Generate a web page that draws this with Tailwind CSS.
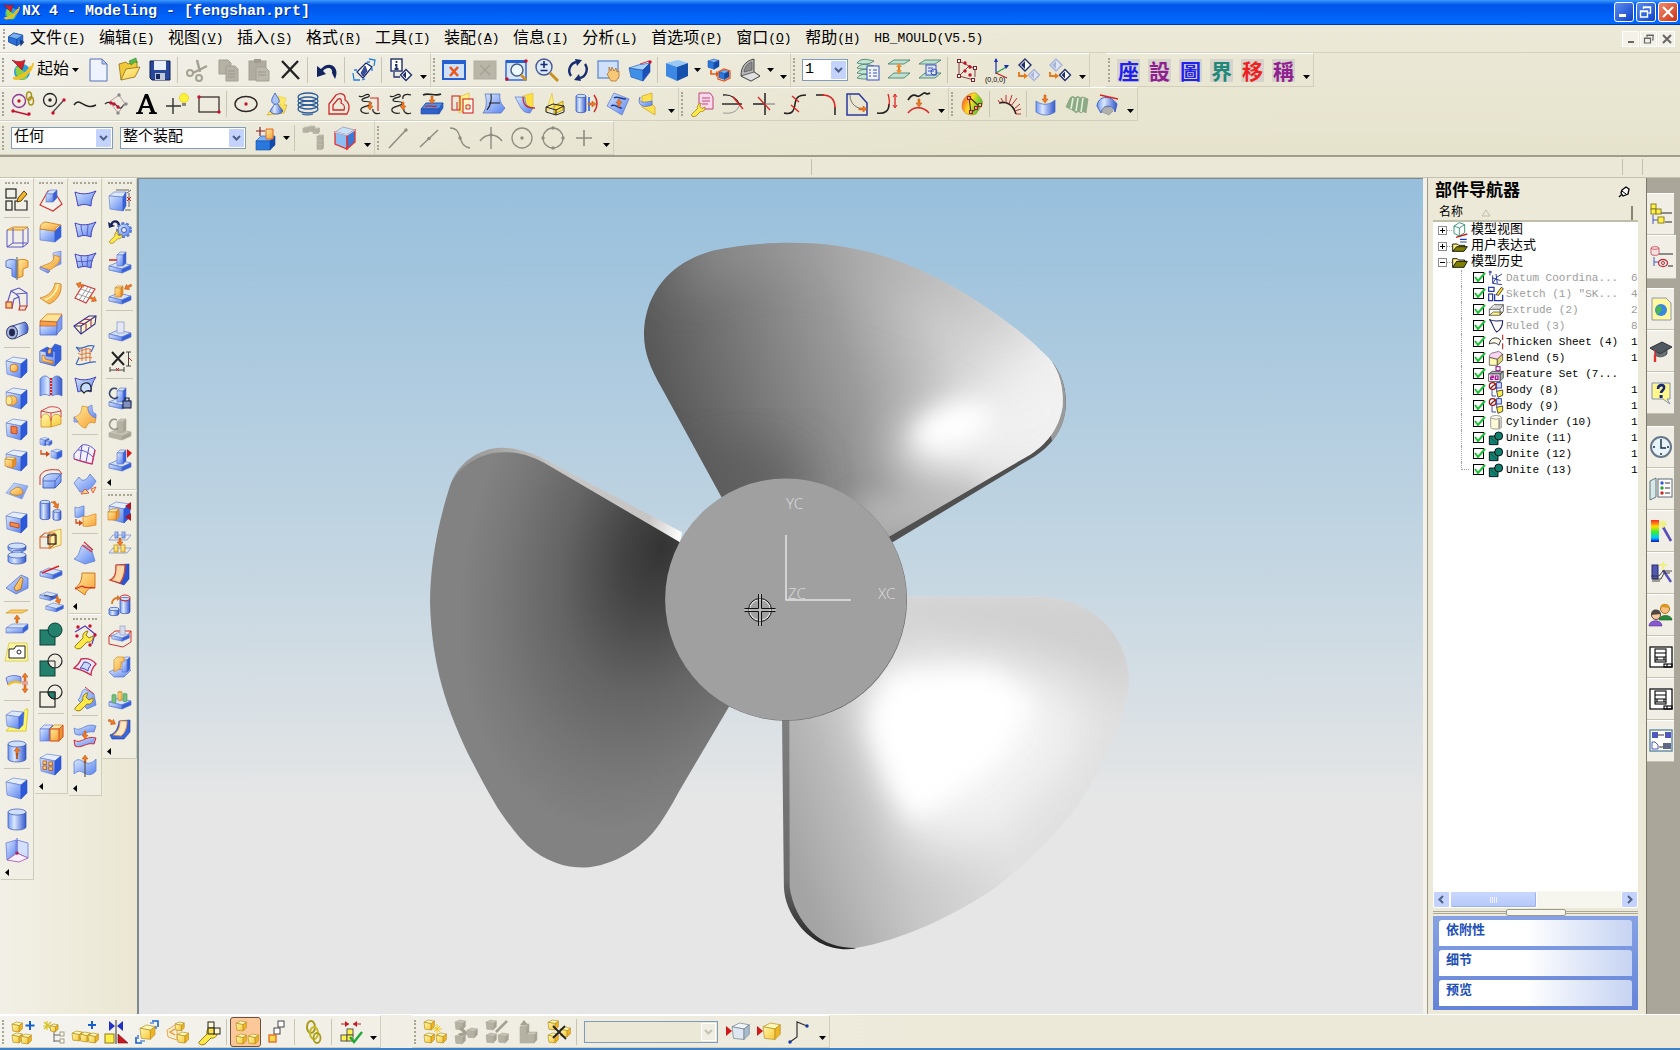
<!DOCTYPE html>
<html lang="zh-CN">

<head>
    <meta charset="UTF-8">
    <meta name="viewport" content="width=device-width, initial-scale=1.0">
    <title>NX 4 - Modeling - [fengshan.prt]</title>
    <script src="https://cdn.jsdelivr.net/npm/@tailwindcss/browser@4"></script>
</head>

<body class="flex h-screen flex-col overflow-hidden bg-[#ece9d8] font-['Liberation_Mono','Noto_Sans_CJK_SC',monospace] text-[13px] text-black">

    <!-- shared gradients -->
    <svg class="absolute h-0 w-0" aria-hidden="true">
        <defs>
            <linearGradient id="gB" x1="0" y1="0" x2="1" y2="1"><stop offset="0" stop-color="#dbe8ff"/><stop offset="1" stop-color="#5a84ee"/></linearGradient>
            <linearGradient id="gY" x1="0" y1="0" x2="1" y2="1"><stop offset="0" stop-color="#fff8b0"/><stop offset="1" stop-color="#f8c838"/></linearGradient>
            <linearGradient id="gO" x1="0" y1="0" x2="1" y2="1"><stop offset="0" stop-color="#ffeb9c"/><stop offset="1" stop-color="#f6a035"/></linearGradient>
            <linearGradient id="gC" x1="0" y1="0" x2="1" y2="0"><stop offset="0" stop-color="#6f98f0"/><stop offset=".35" stop-color="#dbe8ff"/><stop offset="1" stop-color="#3257cc"/></linearGradient>
            <linearGradient id="gR" x1="0" y1="0" x2="0" y2="1"><stop offset="0" stop-color="#f22"/><stop offset=".3" stop-color="#fd0"/><stop offset=".55" stop-color="#3e3"/><stop offset=".8" stop-color="#0cf"/><stop offset="1" stop-color="#11c"/></linearGradient>
            <linearGradient id="gH" x1="0" y1="0" x2="1" y2=".4"><stop offset="0" stop-color="#f33"/><stop offset=".5" stop-color="#fd2"/><stop offset="1" stop-color="#3c3"/></linearGradient>
        </defs>
    </svg>

    <!-- title bar -->
    <header class="flex h-[25px] shrink-0 items-center bg-linear-to-b from-[#3c98ff] from-0% via-[#0054e6] via-20% to-[#0068ff] to-90% pl-[2px] pr-[2px] border-b border-[#0038a8]">
        <span data-icon="logo" class="w-[18px]"></span>
        <h1 class="flex-1 pl-[2px] text-[15px] leading-[22px] font-bold text-white [text-shadow:1px_1px_0_#003090]">NX 4 - Modeling - [fengshan.prt]</h1>
        <div class="flex gap-[2px]">
            <button aria-label="最小化" class="grid h-[20px] w-[20px] place-items-center rounded-[3px] border border-white bg-linear-to-br from-[#5a8cf0] to-[#1040c8]"><svg width="14" height="14"><path d="M2 9h7v3H2z" fill="#fff"/></svg></button>
            <button aria-label="还原" class="grid h-[20px] w-[20px] place-items-center rounded-[3px] border border-white bg-linear-to-br from-[#5a8cf0] to-[#1040c8]"><svg width="14" height="14"><path d="M4.500 4V2h7v6h-2M4 2.500h8M1.500 6h7v6h-7zM1 6.500h8" fill="none" stroke="#fff" stroke-width="1.400"/></svg></button>
            <button aria-label="关闭" class="grid h-[20px] w-[20px] place-items-center rounded-[3px] border border-white bg-linear-to-br from-[#f08868] to-[#cc2f10]"><svg width="14" height="14"><path d="M2 2l10 10M12 2L2 12" stroke="#fff" stroke-width="2.200"/></svg></button>
        </div>
    </header>

    <div class="shrink-0 bg-linear-to-r from-[#f4f3ee] to-[#ece9d8] to-60%">
        <div class="bg-linear-to-b from-transparent to-[#ddd9bb]/40">
            <!-- menu bar -->
            <nav class="flex h-[28px] items-center border-b border-[#d5d2c2]">
                <div class="flex w-[7px] justify-center"><i class="h-[20px] border-l-2 border-dotted border-[#a8a594]"></i></div>
                <span data-icon="part" class="w-[18px]"></span>
                <div id="menus" class="flex flex-1 pl-[5px]"></div>
                <div class="flex gap-px pr-[5px]">
                    <button aria-label="最小化窗口" class="grid h-[16px] w-[17px] place-items-center border border-white bg-[#f3f1e8]"><svg width="12" height="12"><path d="M3 8h6v2H3z" fill="#666"/></svg></button>
                    <button aria-label="还原窗口" class="grid h-[16px] w-[17px] place-items-center border border-white bg-[#f3f1e8]"><svg width="12" height="12"><path d="M4 4V2h6v5H9M4 2.500h7M1.500 5h6v5h-6zM1 5.500h7" fill="none" stroke="#666" stroke-width="1.200"/></svg></button>
                    <button aria-label="关闭窗口" class="grid h-[16px] w-[17px] place-items-center border border-white bg-[#f3f1e8]"><svg width="12" height="12"><path d="M2 2l8 8M10 2l-8 8" stroke="#666" stroke-width="2"/></svg></button>
                </div>
            </nav>

            <!-- toolbar 1 -->
            <div class="flex h-[34px]">
                <div data-bar="start new open save | cut copy paste delete | undo | cubeview | info v"></div>
                <div data-bar="fit fitgrey zoombox zoom rotate pan persp | bluecube > explode section > v"></div>
                <div data-bar="layer layers1 layers2 layers3 | wcs1 wcs2 hide unhide v"></div>
                <div class="w-[16px]"></div>
                <div data-bar="座 設 圖 界 移 稱 v"></div>
            </div>
            <!-- toolbar 2 -->
            <div class="flex h-[34px]">
                <div data-bar="basic line spline studio text point rect | ellipse cone helix offset bridge simplify project combine sheetcut intersect extractc unroll wrap isocline v"></div>
                <div data-bar="editparam trim trimcorner divide fillet stretch length smooth v"></div>
                <div data-bar="analysis | comb | flow reflect slope v"></div>
            </div>
            <!-- selection bar -->
            <div class="flex h-[34px]">
                <div data-bar="any assembly snapcube > | grayflow rededge v"></div>
                <div data-bar="s1 s2 s3 s4 s5 s6 s7 v"></div>
            </div>
        </div>
    </div>

    <!-- cue line -->
    <div class="flex h-[23px] shrink-0 justify-end border-t-2 border-[#a09d8c] border-b border-b-[#c5c2b0] bg-[#ebe8d7] py-[2px]">
        <div class="flex-1"></div>
        <div class="w-[811px] border-l border-[#c2bfae]"></div>
        <div class="w-[20px] border-l border-[#c2bfae]"></div>
        <div class="w-[38px] border-l border-[#c2bfae]"></div>
    </div>

    <main class="flex min-h-0 flex-1">
        <!-- left palettes -->
        <aside class="flex w-[137px] shrink-0 gap-px bg-linear-to-r from-[#f2f0e6] to-[#ebe7d3] pl-px">
            <div class="w-[33px]"><div data-palette="sketch | extrude revolve sweep tube | hole boss pocket pad emboss slot groove rib | offsetface datumtext thicken2 | trimbody split | cubel cyll datumcsys v"></div></div>
            <div class="w-[33px]"><div data-palette="draft blend faceblend softblend chamfer shell sew wraps patch offsets copyf mirror1 slab slab2 unite subtract inter | boxhalf holes4 v"></div></div>
            <div class="w-[33px]"><div data-palette="ruled thru mesh swept sections bridge3 nsided transition | meshred wave enlarge | trimsheet orangepipe v"></div><div data-palette="wrench1 redmesh wrench2 | waves2 waveup v"></div></div>
            <div class="w-[34px]"><div data-palette="dimbox undogear movef placef | greyface deletedim | lockf greylock redflag v"></div><div data-palette="redbox patterns redblend cyl2 redpocket lstep greens radface v"></div></div>
        </aside>

        <!-- graphics window -->
        <section class="relative min-w-0 flex-1 border-l-2 border-t border-[#7c8a92] bg-linear-to-b from-[#97bfdc] via-[#c4d6e2] via-46% to-[#e6e6e6] to-75%">
            <svg class="absolute inset-0 h-full w-full" aria-label="fengshan">
                <defs>
                    <linearGradient id="top1" gradientUnits="userSpaceOnUse" x1="560" y1="500" x2="1330" y2="260"><stop offset="0" stop-color="#565656"/><stop offset=".22" stop-color="#747474"/><stop offset=".5" stop-color="#9c9c9c"/><stop offset=".75" stop-color="#cfcfcf"/><stop offset="1" stop-color="#f0f0f0"/></linearGradient>
                    <radialGradient id="left1" gradientUnits="userSpaceOnUse" cx="540" cy="700" r="560" gradientTransform="translate(540 700) rotate(20) scale(.7 1.050) translate(-540 -700)"><stop offset="0" stop-color="#343434"/><stop offset=".2" stop-color="#444"/><stop offset=".5" stop-color="#646464"/><stop offset=".8" stop-color="#787878"/><stop offset="1" stop-color="#828282"/></radialGradient>
                    <linearGradient id="right1" gradientUnits="userSpaceOnUse" x1="800" y1="1300" x2="1200" y2="1160"><stop offset="0" stop-color="#a4a4a4"/><stop offset=".5" stop-color="#c8c8c8"/><stop offset="1" stop-color="#e0e0e0"/></linearGradient>
                    <linearGradient id="rim" gradientUnits="userSpaceOnUse" x1="110" y1="520" x2="578" y2="680"><stop offset="0" stop-color="#909090"/><stop offset=".4" stop-color="#c8c6c4"/><stop offset=".85" stop-color="#c8c6c4"/><stop offset="1" stop-color="#fff"/></linearGradient>
                    <linearGradient id="rim2" x1="0" y1="0" x2="0" y2="1"><stop offset="0" stop-color="#808080"/><stop offset=".7" stop-color="#6a6a6a"/><stop offset="1" stop-color="#222"/></linearGradient>
                    <filter id="b20" x="-50%" y="-50%" width="200%" height="200%"><feGaussianBlur stdDeviation="24"/></filter>
                    <filter id="b50" x="-50%" y="-50%" width="200%" height="200%"><feGaussianBlur stdDeviation="50"/></filter>
                    <clipPath id="cTop"><path id="pTop" d="M665 600L540 378C515 335 500 300 504 255C512 180 560 125 645 102C700 90 760 86 805 86C900 86 980 102 1060 135C1170 180 1290 265 1345 325C1363 352 1369 380 1367 415C1361 452 1342 485 1300 512L1000 682Z"/></clipPath>
                    <clipPath id="cRight"><path id="pRight" d="M1030 797H1320C1370 800 1410 815 1440 838C1480 870 1503 915 1504 970C1500 1030 1478 1085 1410 1200C1370 1260 1300 1330 1225 1385C1130 1445 1040 1485 940 1504C905 1503 875 1495 850 1472C825 1448 808 1415 804 1380L803 1000Z"/></clipPath>
                </defs>
                <g transform="translate(261 21) scale(.4847 .4974)">
                    <path d="M1005 690L1018 687L1310 515C1350 490 1369 455 1373 420C1376 385 1368 352 1345 325L1300 400L1000 660Z" fill="#505050"/>
                    <path d="M1373 420C1376 385 1368 352 1345 325L1330 400L1345 485C1362 465 1371 445 1373 420Z" fill="#9a9a9a"/>
                    <use href="#pTop" fill="url(#top1)"/>
                    <g clip-path="url(#cTop)">
                        <ellipse cx="700" cy="560" rx="140" ry="70" fill="#5a5a5a" opacity=".7" filter="url(#b50)"/>
                        <path d="M640 60L1060 60L1330 260L1330 290L1000 160L760 110L560 180Z" fill="#a2a2a2" opacity=".6" filter="url(#b50)"/>
                        <path d="M1000 500L1130 410L1300 320L1420 330L1420 480L1330 560L1080 560Z" fill="#f2f2f2" opacity=".9" filter="url(#b50)"/>
                        <ellipse cx="1140" cy="455" rx="85" ry="42" fill="#fff" transform="rotate(-20 1140 455)" filter="url(#b20)"/>
                        <path d="M960 700L930 600L1180 560L1200 610Z" fill="#bcbcbc" opacity=".7" filter="url(#b20)"/>
                    </g>

                    <path d="M582 668L290 517C250 500 215 495 190 500C150 508 118 535 105 570L130 620L575 700Z" fill="url(#rim)"/>
                    <path d="M590 695L300 530C260 508 230 505 195 508C150 516 115 545 103 575C75 660 62 740 62 810C66 960 110 1070 200 1220C230 1265 250 1285 262 1297C300 1330 340 1342 380 1342C440 1340 500 1300 525 1268C540 1250 560 1218 575 1190L690 1000Z" fill="url(#left1)"/>

                    <path d="M788 1030L792 1380C793 1410 805 1435 825 1460C850 1490 890 1512 940 1505L860 1440L815 1030Z" fill="url(#rim2)"/>
                    <use href="#pRight" fill="url(#right1)"/>
                    <g clip-path="url(#cRight)">
                        <path d="M1000 780H1560V1000L1340 930L1000 880Z" fill="#cfcfcf" filter="url(#b50)"/>
                        <path d="M1000 920L1240 930L1400 1000L1400 1110L1220 1290L1060 1310L990 1130L950 1010Z" fill="#f6f6f6" opacity=".85" filter="url(#b50)"/>
                        <path d="M1020 950L1220 945L1310 1010L1250 1120L1130 1210L1060 1250L1010 1180L965 1060L975 1010Z" fill="#fff" filter="url(#b20)"/>
                    </g>
                    <ellipse cx="797" cy="804" rx="249" ry="243" fill="#666"/>
                    <ellipse cx="796" cy="803" rx="249" ry="243" fill="#a0a0a0"/>
                </g>
                <path d="M647 356V421H712" fill="none" stroke="#e4e4e4" stroke-width="1.500"/>
                <g class="font-['Noto_Sans',sans-serif] text-[15px] font-light" fill="#d6d6d6">
                    <text x="647" y="330">YC</text>
                    <text x="649" y="420">ZC</text>
                    <text x="739" y="420">XC</text>
                </g>
                <g fill="none" stroke="#111">
                    <circle cx="621" cy="431" r="10.500" stroke="#e8e8e8" stroke-width="1.200"/>
                    <circle cx="621" cy="431" r="11.500"/>
                    <path d="M621 415v32M605 431h32" stroke="#ccc"/>
                    <path d="M619.500 415v14.500h-14M622.500 415v14.500h14M619.500 447v-14.500h-14M622.500 447v-14.500h14"/>
                </g>
            </svg>
        </section>

        <!-- part navigator -->
        <div class="w-[5px] shrink-0 border-r border-[#9c9986] bg-[#f4f2e8]"></div>
        <aside class="flex w-[218px] shrink-0 flex-col border-l-[5px] border-r-[8px] border-[#ece9d8] bg-[#ece9d8] pb-[4px]">
            <div class="flex h-[26px] items-center justify-between pt-[2px] pr-[6px] pl-[2px]">
                <h2 class="text-[17px] leading-[24px] font-bold">部件导航器</h2>
                <button aria-label="固定" class="w-[14px]"><svg width="12" height="12"><path d="M1 11l3-3M4 4l4-3 3 2-1 5-5 2-2-3z" fill="#fff" stroke="#000" stroke-width="1.300"/><path d="M4 5l4 3" stroke="#000"/></svg></button>
            </div>
            <div class="flex h-[18px] shrink-0 items-center border-b-2 border-[#c0bda8] pt-[2px] pl-[6px] text-[12px] leading-[14px]">
                <span class="w-[42px]">名称</span><svg width="10" height="8"><path d="M1 7l4-6 4 6z" fill="none" stroke="#c0bda8"/></svg>
                <i class="mr-[5px] ml-auto h-[14px] border-l-2 border-[#888571]"></i>
            </div>
            <ul id="tree" class="min-h-0 flex-1 overflow-hidden bg-white"></ul>
            <div class="flex h-[17px] shrink-0 bg-[#f6f5ee]">
                <button aria-label="向左滚动" class="grid w-[17px] place-items-center rounded-[2px] border border-white bg-[#c3d3fd]"><svg width="9" height="9"><path d="M6 1L2.500 4.500 6 8" fill="none" stroke="#4d6185" stroke-width="2"/></svg></button>
                <div class="grid w-[87px] place-items-center rounded-[2px] border border-white bg-linear-to-b from-[#c9d7fe] to-[#b5c8f8] shadow-[inset_-1px_-1px_0_#9ab2e8]"><svg width="10" height="6"><path d="M1.500 0v6M3.500 0v6M5.500 0v6M7.500 0v6" stroke="#eef3ff"/></svg></div>
                <button aria-label="向右滚动" class="ml-auto grid w-[17px] place-items-center rounded-[2px] border border-white bg-[#c3d3fd]"><svg width="9" height="9"><path d="M3 1l3.500 3.500L3 8" fill="none" stroke="#4d6185" stroke-width="2"/></svg></button>
            </div>
            <div class="flex h-[8px] shrink-0 items-center">
                <i class="h-[3px] flex-1 border-y border-[#aca899]"></i>
                <i class="h-[7px] w-[60px] rounded-[2px] border border-[#9c9986] bg-[#f6f5ee]"></i>
                <i class="h-[3px] flex-1 border-y border-[#aca899]"></i>
            </div>
            <div class="flex shrink-0 flex-col gap-[4px] bg-linear-to-b from-[#86a2e4] to-[#6583d8] px-[6px] py-[4px] text-[13px] font-bold text-[#1c50b8]">
                <button class="h-[26px] rounded-t-[3px] bg-linear-to-r from-white from-45% to-[#c6d3f2] pl-[7px] pb-[4px] text-left leading-[22px]">依附性</button>
                <button class="h-[26px] rounded-t-[3px] bg-linear-to-r from-white from-45% to-[#c6d3f2] pl-[7px] pb-[4px] text-left leading-[22px]">细节</button>
                <button class="h-[26px] rounded-t-[3px] bg-linear-to-r from-white from-45% to-[#c6d3f2] pl-[7px] pb-[4px] text-left leading-[22px]">预览</button>
            </div>
        </aside>

        <!-- resource bar -->
        <div class="flex w-[34px] shrink-0 flex-col border-l border-[#7c796a] bg-[#aaa699] pt-[15px]">
            <div id="tabs1" class="flex flex-col"></div>
            <div id="tabs2" class="mt-[9px] flex flex-col"></div>
            <div id="tabs3" class="mt-[12px] flex flex-col"></div>
        </div>
    </main>

    <!-- assembly toolbar -->
    <footer class="flex h-[36px] shrink-0 border-t border-b-2 border-t-white border-b-[#3d82c8] bg-linear-to-r from-[#f4f3ee] to-[#ece9d8] to-60%">
        <div data-bar="addcomp newcomp array mirror explodea replace mate | compson move | chain | check v"></div>
        <div class="w-[31px]"></div>
        <div data-bar="ex1 ex2 ex3 ex4 ex5 | explosion hidec showc trace v"></div>
    </footer>

    <script>
        // drawing helpers, all on a 24x24 grid
        const p = (d, f = 'none', s = '#222', w = 1) => `<path d="${d}" fill="${f}" stroke="${s}" stroke-width="${w}"/>`;
        const l = (d, s = '#222', w = 1) => p(d, 'none', s, w);
        const c = (x, y, r, f = 'none', s = 'none', w = 1) => `<circle cx="${x}" cy="${y}" r="${r}" fill="${f}" stroke="${s}" stroke-width="${w}"/>`;
        const e = (x, y, rx, ry, f = 'none', s = 'none', w = 1) => `<ellipse cx="${x}" cy="${y}" rx="${rx}" ry="${ry}" fill="${f}" stroke="${s}" stroke-width="${w}"/>`;
        const r = (x, y, w, h, f = 'none', s = 'none', sw = 1) => `<rect x="${x}" y="${y}" width="${w}" height="${h}" fill="${f}" stroke="${s}" stroke-width="${sw}"/>`;
        const tones = {
            b: ['#d3e2ff', 'url(#gB)', '#3460dc', '#5a74c8'],
            d: ['#7fb4f4', '#2a78dc', '#124aa8', '#124aa8'],
            y: ['#fff8b8', 'url(#gY)', '#f0b428', '#b89020'],
            o: ['#ffe8a0', 'url(#gO)', '#ee9430', '#c87818'],
            g: ['#c6c3b6', '#b5b2a4', '#a5a293', '#b0ad9e'],
            w: ['#f2f6fa', '#dfe8f0', '#a9bccc', '#6d8090'],
        };
        const box = (x, y, w, h, d, t = 'b') => {
            const k = tones[t];
            return p(`M${x} ${y + d}l${d} ${-d}h${w}l${-d} ${d}z`, k[0], k[3], .6) + p(`M${x + w} ${y + d}l${d} ${-d}v${h}l${-d} ${d}z`, k[2], k[3], .6) + r(x, y + d, w, h, k[1], k[3], .6);
        };
        const cyl = (x, y, rx, h, f = 'url(#gC)', s = '#3552b0', t = '#cfe0ff') => p(`M${x - rx} ${y}v${h}a${rx} ${rx / 3} 0 0 0 ${rx * 2} 0v${-h}`, f, s, .7) + e(x, y, rx, rx / 3, t, s, .7);
        const iso = (x, y, s, t = 'b') => {
            const k = tones[t];
            return p(`M${x} ${y}l${s} ${-s * .35} ${s} ${s * .25} ${-s * .9} ${s * .4}z`, k[0], k[3], .5) + p(`M${x} ${y}l${s * 1.1} ${s * .3}v${s * 1.2}l${-s * 1.1} ${-s * .35}z`, k[1], k[3], .5) + p(`M${x + s * 2} ${y - s * .1}l${-s * .9} ${s * .4}v${s * 1.2}l${s * .9} ${-s * .5}z`, k[2], k[3], .5);
        };
        // small yellow component block
        const comp = (x, y, s = 9, t = 'y') => {
            const k = tones[t];
            return p(`M${x} ${y + s * .25}l${s * .5} ${-s * .25} ${s * .65} ${s * .12} ${-s * .35} ${s * .28}z`, k[0], k[3], .7) + p(`M${x} ${y + s * .25}l${s * .8} ${s * .15}v${s * .7}l${-s * .7} ${-s * .08}z`, k[1], k[3], .7) + p(`M${x + s * .8} ${y + s * .4}l${s * .35} ${-s * .28}v${s * .62}l${-s * .35} ${s * .36}z`, k[2], k[3], .7);
        };
        const plate = (y, t = 'b') => p(`M1 ${y + 3}l6-4h16l-5 4z`, tones[t][0], tones[t][3], .6) + p(`M1 ${y + 3}h17v5H1z`, tones[t][1], tones[t][3], .6) + p(`M18 ${y + 3}l5-4v5l-5 4z`, tones[t][2], tones[t][3], .6);
        const dot = (x, y, f = '#c8102e') => c(x, y, 1.7, f);
        const arrow = (x, y, a = 0) => `<g transform="translate(${x} ${y}) rotate(${a})">${p('M-1-4h2v4h2L0 4-3 0h2z', '#f07a20', '#b85010', .5)}</g>`;
        const wrench = p('M2 22l8-8c-1-4 2-7 5-7l-2 4 3 3 4-2c1 4-3 7-6 6l-6 6c-3 2-7 0-6-2z', '#ffe84a', '#8a7000', .9);
        const gball = r(1, 8, 15, 15, '#23806c', '#0c4038') + c(16, 8, 7, '#23806c', '#0c4038');
        // feature block: light front face, deep blue side
        const cubeb = p('M1 6l7-4 14 2-6 5z', '#e4eeff', '#5a74c8', .6) + p('M1 6l15 3v14L2 19z', 'url(#gB)', '#5a74c8', .6) + p('M16 9l6-5v13l-6 6z', '#2c58dc', '#2c50c0', .6);
        const slab = (y, t) => p(`M1 ${y + 4}l9-4 13 3-9 4z`, tones[t || 'b'][0], tones[t || 'b'][3], .7) + p(`M1 ${y + 4}l13 3v4L1 ${y + 8}z`, tones[t || 'b'][1], tones[t || 'b'][3], .7) + p(`M14 ${y + 7}l9-4v4l-9 4z`, tones[t || 'b'][2], tones[t || 'b'][3], .7);
        const base = (t) => slab(12, t);
        const step = (t = 'b') => base(t) + box(9, 2, 6, 11, 3, t);
        const dia = (x, y, s, t) => p(`M${x} ${y - s}l${s} ${s} ${-s} ${s} ${-s} ${-s}z`, t ? '#dfe5f5' : '#fff', t || '#20306a', 1.4) + p(`M${x} ${y - s + 2}v${2 * s - 4}l${-s + 2} ${-s + 2}z`, t || '#20306a', 'none');
        const sheets = (a) => p('M1 6l6-4h16l-6 4z', '#bfe0d0', '#3c7868', .8) + p('M1 20l6-5h16l-6 5z', '#bfe0d0', '#3c7868', .8) + a;
        const bands = p('M2 4c7 3 14 2 21-1-3 4-5 9-5 15-5-2-9-2-13 0C4 13 3 8 2 4z', 'url(#gB)', '#4440b8', 1);

        const icons = {
            logo: c(12, 14, 8, '#28a0d8') + p('M6 9c4-2 8 8 12 6l-2 6c-6 3-12-4-10-12z', '#8fd040', 'none') + l('M3 20c6 4 20-6 20-15M3 20c4 0 13-3 18-12', '#f4c020', 1.800) + p('M2 2l10 10L15 2c-4 2-8 2-13 0z', '#d8202c', '#801018', .6),
            part: p('M2 9l7-5 12 3v9l-8 5-11-5z', '#2870d8', '#103c90') + p('M2 9l11 3 8-5-12-3z', '#78b0f0', '#103c90', .7) + l('M13 12v9', '#103c90') + p('M17 12l6 4-5 6z', '#1a3c80', 'none'),
            new: p('M4 1h12l5 5v17H4z', '#eef3ff', '#5570b8', 1) + p('M16 1v5h5z', '#b8c8f0', '#5570b8', .8),
            open: p('M2 6l7-2 2 2 9-3v8L4 22z', '#f0c838', '#907010', .8) + p('M4 22l5-11 14-2-5 10z', 'url(#gY)', '#907010', .8) + p('M12 3l7-3 1 5-2-1-4 3z', '#58b848', '#287820', .5),
            save: p('M2 3h20v19H4l-2-2z', '#28489c', '#101c50') + r(6, 3, 12, 9, '#e8f0fc') + r(7, 15, 10, 7, '#c0c8d8') + r(8, 16, 4, 5, '#182860'),
            cut: l('M12 2l3 12M22 8L8 15', '#a5a294', 2.500) + c(5, 15, 3, 'none', '#a5a294', 2) + c(14, 20, 3, 'none', '#a5a294', 2),
            copy: p('M3 2h9l3 3v11H3z', '#b5b2a5', '#a3a094') + p('M10 8h9l3 3v12H10z', '#b5b2a5', '#a3a094') + l('M12 13h7M12 16h7M12 19h7', '#9a978a'),
            paste: r(2, 3, 17, 19, '#b0ada0', '#a3a094') + r(7, 1, 7, 4, '#a09d90') + p('M9 9h9l4 4v10H9z', '#bbb8ab', '#a3a094') + l('M11 14h8M11 17h8', '#9a978a'),
            delete: l('M4 3l17 18M20 3L4 20', '#222', 2.400),
            undo: p('M2 8v11l9-3-3-3c4-5 10-3 9 2l3 6c6-13-7-19-14-10z', '#14245e', 'none'),
            cubeview: p('M5 14L14 5l6 4-9 11z', '#fff', '#182870', 1.200) + p('M9 15l4-7 2 5-4 5z', '#3850a0', '#182870', .8) + l('M17 1l6 1-1 6M15 4l3 0M20 10l0 3M1 15l1 7 6 0M5 12l-3 0M10 22l3-1', '#2080e0', 1.300),
            info: r(2, 1, 11, 12, '#fff', '#20306a', 1.400) + l('M7.500 3v2M6 7h1.500v4M5.500 11h4', '#20306a', 1.800) + dia(17, 17, 5.500) + l('M5 14v5h6', '#20306a', 1.300),
            fit: r(1, 3, 22, 18, '#cfe0fc', '#2860d0', 2) + r(1, 3, 22, 3, '#2860d0') + l('M8 9l8 9M16 9l-8 9', '#e85818', 2.600),
            fitgrey: r(1, 3, 22, 18, '#b9b6a8', '#b0ada0', 1) + l('M7 7l10 10M17 7L7 17', '#a3a094', 1.300),
            zoombox: r(2, 3, 20, 19, '#d8e6fc', '#2860d0', 1.400) + r(2, 2, 20, 3, '#2860d0') + c(13, 12, 6, '#eef8ff', '#486080', 1.500) + l('M17 17l5 5', '#d89018', 2.600) + dot(22, 3) + dot(3, 21),
            zoom: c(9, 9, 8, '#dbeaff', '#485890', 1.400) + l('M9 3v7M5.500 6.500h7M5.500 12.500h7', '#182870', 1.600) + l('M15 15l8 8', '#c89020', 3),
            rotate: l('M10 4a9 9 0 0 0-5 14', '#182c70', 2.400) + l('M14 20a9 9 0 0 0 5-14', '#182c70', 2.400) + p('M9 1l7 1-5 6zM15 23l-7-1 5-6z', '#182c70', 'none'),
            pan: r(1, 3, 20, 17, '#cfe0fc', '#6890d8', 1.400) + p('M10 16l2-2v-5l2 4 1-4 2 4 2-3 1 4 2-1v6l-3 4h-5z', '#f8c878', '#a86818', .7),
            persp: p('M1 10l14 2v11L3 19z', '#4090e8', '#1850b0', .6) + p('M1 10l9-3 12-2-7 7z', '#a8d0fc', '#1850b0', .6) + p('M15 12l7-7v9l-7 9z', '#1c50b8', '#1850b0', .6) + dot(22, 4) + l('M12 6l9-3', '#c8102e', .8),
            bluecube: p('M1 5l12-3 10 3-11 4z', '#98c8f8', 'none') + p('M1 5l11 4v14L1 18z', '#3c88e4', 'none') + p('M12 9l11-4v13l-11 5z', '#1450ac', 'none'),
            explode: iso(1, 3, 5.500, 'd') + l('M4 12v4h5', '#e85818', 1.600) + p('M9 13l3 3-3 3z', '#e85818', 'none') + iso(12, 14, 5, 'd') + p('M11 14l6-3 6 2v7l-6 3-6-2z', 'none', '#e85818', 1.300),
            section: p('M3 18c0-9 4-15 13-17v13l6 4-9 5z', '#b8b8b8', '#484848', 1) + p('M3 18l13-4 6 4-9 5z', '#e0e0e0', '#484848', .8) + p('M6 14c1-6 4-9 8-10v8z', '#8c8c8c', '#484848', .6),
            layers1: [2, 7, 12, 17].map(y => p(`M1 ${y + 3}c4-5 9-4 17-2-4 3-9 4-17 2z`, '#c4e4d4', '#3c7868', .8)).join('') + r(11, 8, 12, 14, '#f0f4ff', '#3850b8') + l('M13 12h2M13 15h2M13 18h2M17 12h4M17 15h4M17 18h4', '#3850b8'),
            layers2: sheets(l('M12 6v9', '#e87818', 2) + p('M9 9l3-4 3 4zM9 12l3 4 3-4z', '#f09030', 'none')),
            layers3: sheets(r(8, 7, 10, 10, '#dfe8ff', '#3850b8') + l('M10 10h5M10 13h6', '#3850b8') + c(16, 14, 3, 'none', '#3850b8')),
            wcs1: l('M4 3v15l15 4M4 3l16 8v8M4 18L15 7', '#803030', .9) + [[4, 3], [4, 18], [20, 10], [18, 22]].map(a => r(a[0] - 1.5, a[1] - 1.5, 3, 3, '#fff', '#802030')).join('') + [[10, 5], [10, 13], [15, 17], [15, 9]].map(a => dot(...a)).join(''),
            wcs2: l('M10 16V1', '#1830b0', 1.200) + l('M10 15l12-7', '#20a040', 1.200) + l('M10 15l11 5', '#c82020', 1.200) + p('M10 0l-2 4h4zM23 7l-5 0 2 4z', '#1830b0', 'none') + `<text x="-1" y="24" font-size="7" font-family="Liberation Sans">(0,0,0)</text>`,
            hide: dia(8, 7, 6) + dia(17, 17, 5.500, '#a8b4d8') + l('M2 14v4h5', '#e87818', 1.800) + p('M7 15l4 3-4 3z', '#e87818', 'none'),
            unhide: dia(8, 7, 6, '#a8b4d8') + dia(17, 17, 5.500) + l('M2 14v4h5', '#e87818', 1.800) + p('M7 15l4 3-4 3z', '#e87818', 'none'),
            basic: c(8, 9, 6.500, 'none', '#903898', 1.400) + dot(8, 9) + e(18, 4, 2.500, 4, 'none', '#a89018', 1.500) + e(20, 9, 2.500, 4, 'none', '#a89018', 1.500) + l('M2 19l16 4', '#c8102e', 1.600) + dot(2, 19) + dot(18, 22),
            line: c(8, 8, 6.500, 'none', '#222', 1.300) + dot(8, 8, '#222') + l('M11 20L21 9', '#444', 1.200) + dot(22, 8) + dot(11, 21),
            spline: l('M1 13c6-9 10 6 22 0', '#222', 1.400),
            studio: l('M1 12c4-4 6 0 9 0 4 1 4 5 7 4 2-1 2-4 5-4', '#222', 1.200) + l('M5 10L15 3l6 9-7 9-6-8', '#a89898', .9) + dot(7, 11) + dot(14, 15) + dot(10, 12) + dot(15, 3, '#888') + dot(14, 21, '#888') + dot(22, 12, '#888'),
            text: p('M1 22v-1.500l2-.5L10 2h3l7 18 2 .5V22h-8v-1.500l2-.5-1.500-4H7.500L6 20l2 .5V22zM8 14h6l-3-8z', '#000', 'none'),
            point: l('M7 6v16M0 14h15', '#333', 1.400) + c(18, 6, 4.500, '#fff23c', '#e8d820') + r(16, 11, 4, 3, '#888'),
            rect: r(2, 5, 20, 15, 'none', '#403030', 1.300) + dot(2, 5) + dot(22, 20),
            ellipse: e(12, 12, 11, 7.500, 'none', '#302828', 1.400) + dot(12, 12),
            cone: p('M2 23l8-10h12l-3 8z', '#ffe860', '#c8a818', .7) + p('M12 4l9 2-3 12z', '#ffe860', '#e8c840', .5) + p('M11 10L5 19c2 4 11 4 13 0z', 'url(#gC)', '#3552b0', .8) + p('M10 1c-2 4-4 6-3 9s6 3 7 0-2-5-4-9z', '#a8c4f8', '#3552b0', .8),
            helix: [5, 9, 13, 17].map(y => e(12, y, 10, 4, 'none', '#2c5c98', 1.300)).join('') + l('M6 22c3 1 8 1 11 0', '#2c5c98', 1.300),
            offset: l('M2 22V12L9 3c5-3 10-1 9 5 5 3 5 9 2 14z', '#d02828', 1.300) + l('M6 18v-5l5-6c3-1 4 1 3 4 4 2 4 4 3 7z', '#d02828', 1.300),
            bridge: l('M1 4c3 3 8-4 10-1s-7 2-7 5 8 0 9 3-9 3-10 6 3 5 8 4', '#222', 1.200) + l('M22 21c-4 2-8-1-7-4', '#222', 1.200) + l('M12 6h8v13', '#d02828', 1.200) + arrow(12, 14),
            simplify: l('M1 4c3 3 8-4 10-1s-7 2-7 5 8 0 9 3-9 3-10 6 3 5 8 4', '#222', 1.200) + l('M22 3c-6-2-9 1-8 4M22 21c-4 2-8-1-7-4', '#222', 1.200) + arrow(14, 14),
            project: l('M3 3c6-3 12 2 18-1', '#222', 1.600) + p('M1 17l5-6h17l-4 6z', '#5090e8', '#2450b0') + p('M1 17h18v5H1zM19 17l4-6v5l-4 6z', '#3060c8', '#2450b0', .6) + arrow(12, 8) + l('M5 15c4-3 8 1 12-1', '#d02828', 1.300),
            combine: p('M8 5l10-4v14l-10 6z', '#ffee80', '#e0c040', .8) + r(1, 4, 8, 14, 'none', '#d02828', 1.100) + r(12, 7, 10, 14, '#fff8', '#d02828', 1.100) + l('M15 17v-4h4v4zM6 10v8', '#d02828'),
            sheetcut: p('M3 2h15c-1 6 1 10 5 14l-4 5H1c4-5 4-13 2-19z', 'url(#gB)', '#5878c8', .8) + l('M9 2c1 6-1 12-4 16M7 11h11', '#222', 1.100),
            intersect: p('M10 4l10-3v14l-9 5z', '#ffe040', '#e0c040', .7) + p('M2 5h10c0 7 2 10 8 11l-3 5C8 21 7 13 2 5z', 'url(#gB)', '#5878c8', .7) + l('M10 5c0 8 3 11 12 11', '#c82828', 1.300),
            extractc: p('M8 1l2 13-8 6z', '#ffee80', '#e0c040', .7) + p('M10 14l9-5v9l-9 4z', '#ffe040', '#a08010', .7) + l('M2 15l7-3 11 2v6l-8 3-10-3zM2 15l10 3 8-4M12 18v5', '#222', 1),
            unroll: cyl(6, 4, 5, 15) + l('M14 5v14', '#5080e0', 2) + l('M19 3c4 5 4 12 0 17', '#d02828', 1.500) + arrow(17, 12, -90),
            wrap: p('M1 14L8 1l15 6-7 16z', 'url(#gB)', '#5878c8', .7) + l('M8 6c3-3 8 2 12 1M5 14c4-3 8 3 11 2', '#1c3c90', 1.500) + arrow(13, 11, 180),
            isocline: p('M5 4l10-3v11l3 3v8L5 15z', '#ffe050', '#d0a828', .8) + p('M3 5c-2 6 4 6 12 4v4C5 17 0 12 3 5z', 'url(#gB)', '#5878c8', .8),
            editparam: p('M9 1h11l3 4v12H9z', '#ffd8ec', '#b84878') + l('M12 6h8M12 9h8M12 12h6', '#b84878') + `<g transform="translate(0 6) scale(.75)">${wrench}</g>`,
            trim: l('M2 3c8-1 14 4 17 10', '#222', 1.400) + l('M1 12h20', '#222', 1.400) + l('M12 5l10 12', '#e02020', 1.300) + l('M18 14c-2 6-8 8-16 7', '#999', 1),
            trimcorner: l('M13 1v22', '#222', 1.500) + l('M1 12h12', '#222', 1.500) + l('M13 12h10', '#888', 1.200) + l('M6 5l12 13', '#e02020', 1.200),
            divide: l('M1 21c8 2 10-2 11-9s4-9 11-9', '#222', 1.600) + l('M9 4l7 6M8 13l8 7', '#e02020', 1.300),
            fillet: l('M2 3h8M21 15v8', '#222', 1.500) + l('M8 3c9 0 13 4 13 13', '#e02020', 1.500),
            stretch: p('M2 2h12l8 9v12H2z', 'none', '#2838a0', 1.500) + l('M5 3c0 10 8 14 14 14', '#666', .9) + arrow(18, 17, -90),
            length: l('M1 21c8 1 12-2 12-9', '#222', 1.600) + l('M13 13c1-4 0-7-1-11M19 3v12', '#e02020', 1.300) + l('M17 5l2-3 2 3M17 13l2 3 2-3', '#e02020'),
            smooth: l('M1 8c3-5 6-6 9-4s6-4 8-3 2 2 5 0', '#222', 1.700) + l('M1 21c5-7 15-7 21 0', '#e02020', 1.500) + arrow(12, 11),
            analysis: p('M2 14C2 4 12 0 16 1c4 4 8 8 6 12l-6 9c-8 3-14-2-14-8z', 'url(#gH)', '#c87820', .6) + l('M9 5l10 9-8 7z', '#502020', 1.100) + [[9, 6], [20, 13], [11, 20], [16, 16]].map(a => r(a[0] - 1.5, a[1] - 1.5, 3, 3, '#fff8', '#a02020')).join(''),
            comb: l('M2 11c7-2 14 1 17 11', '#222', 1.600) + l('M3 11L1 8M6 10L4 6M9 11l0-8M12 12l3-9M14 14l6-8M17 17l6-5M18 19l6-2M19 22l5 0', '#d02828', 1),
            flow: p('M2 9c6 5 14 4 19-1v12c-6 4-13 4-19 0z', 'url(#gC)', '#5070c8', .8) + arrow(11, 7),
            reflect: p('M1 15l4-9c2-2 4-2 5 0 2-2 4-2 5 0 3-2 6 0 8 1l-2 14c-2-2-4-1-5 0-2-2-4-1-5 0-3-3-6-4-10-6z', '#8cab84', '#789870', .6) + l('M8 6L6 17M13 6l-2 13M18 6l-2 14', '#e4f0dc', 1.600),
            slope: p('M1 14C2 4 14 2 21 12l-2 8c-2-7-12-9-14 1z', 'url(#gC)', '#3860c0') + p('M6 20c0-6 8-7 11-1l-4 4z', '#b0b0b0', '#888', .6) + l('M4 3l18 4', '#e02020', 1.400),
            snapcube: box(2, 10, 14, 9, 5, 'd') + p('M12 3h7v10h-7z', 'url(#gO)', '#e06820') + l('M6 1v9M2 5h9', '#802020', 1.200),
            grayflow: [[4, 4], [9, 3], [14, 5], [18, 12], [18, 17], [18, 21]].map(a => box(a[0] - 3, a[1] - 3, 5, 4, 1.500, 'g')).join(''),
            rededge: p('M2 6l8-5 12 3-8 5z', '#c8e0f8', '#889', .6) + p('M2 6l12 3v14L2 18z', '#8cbef4', '#e83030', 1.300) + p('M14 9l8-5v12l-8 7z', '#3c78d4', '#e83030', 1.300) + l('M2 6l12 3 8-5', '#bcd4f0', 1.300),
            s1: l('M3 22L20 4', '#8f8c80', 1.500) + dot(20, 4, '#8f8c80'), s2: l('M3 21L21 4', '#8f8c80', 1.500) + dot(12, 12.500, '#8f8c80'),
            s3: l('M2 2c14 0 6 18 20 20', '#8f8c80', 1.400) + dot(12, 12, '#8f8c80'), s4: l('M1 15c6-8 16-8 22 0M12 1v22', '#8f8c80', 1.400) + dot(12, 9, '#8f8c80'),
            s5: c(12, 12, 10, 'none', '#8f8c80', 1.300) + dot(12, 12, '#8f8c80'), s6: c(12, 12, 10, 'none', '#8f8c80', 1.300) + dot(12, 2, '#8f8c80') + dot(12, 22, '#8f8c80') + dot(2, 12, '#8f8c80') + dot(22, 12, '#8f8c80'),
            s7: l('M12 4v16M4 12h16', '#8f8c80', 1.600),

            // feature palettes
            sketch: r(1, 1, 10, 9, 'none', '#222', 1.200) + r(1, 13, 6, 9, 'none', '#222', 1.200) + l('M14 13h-4v9h12v-9h-3', '#222', 1.200) + p('M12 14l1-4 6-7 3 3-6 7z', '#f0b828', '#503008', .9),
            extrude: p('M2 5l6-3h15l-5 3z', '#ffd880', '#c07818', .8) + l('M2 5v17h16V5M18 22l5-4V3M2 22l6-4h14M8 3v15', '#5a56c8', 1),
            revolve: p('M1 5c3-2 6-2 10-1v18l-4-2v-7l-6-2z', 'url(#gB)', '#5a74c8') + p('M13 4c4-1 7-1 10 1v6l-5 2v7l-5 2z', 'url(#gO)', '#d08828') + l('M12 1v23', '#444', .9),
            sweep: l('M2 17L6 4l8-3 8 5v13M2 17l5 4 2-9 5-2 1 9M6 4l5 3 11-1M11 7l3 3', '#5a56c8', 1.100) + r(1, 15, 6, 6, '#ffd080', '#c83018', 1.100) + p('M15 19h7l-2 4h-6z', '#ffe0e0', '#c83018', 1.100),
            tube: p('M7 8l13-4c3 2 4 7 2 11L9 21z', 'url(#gC)', '#444c80') + e(7, 14.500, 5.500, 6.500, '#a8b4e0', '#303860') + e(7, 14.500, 3, 3.800, '#202850'),
            hole: cubeb + c(9, 13, 4, 'url(#gO)', '#b05818', .7), boss: cubeb + p('M4 10h5c4 2 4 7 0 9H4z', 'url(#gO)', '#c07818', .7) + e(4, 14.500, 3, 4.500, '#ffe890', '#c07818', .7),
            pocket: cubeb + p('M6 9l6 1v7l-6-1z', '#f08040', '#c03818', .8), pad: cubeb + p('M0 11l3-2 8 1-3 2z', '#fff0b0', '#c07818', .6) + p('M0 11l8 1v8l-8-2z', 'url(#gO)', '#c07818', .6) + p('M8 12l3-2v7l-3 3z', '#f09030', '#c07818', .6),
            emboss: p('M1 14l8-10 14 3-6 13z', 'url(#gB)', '#7c96d8', .7) + p('M5 14c1-4 4-3 5-5 4-2 7 0 8 5-3 3-9 3-13 0z', 'url(#gO)', '#c07818', .8), slot: cubeb + p('M5 12l9 2v4l-9-2z', '#f09048', '#c03818', .8),
            groove: cyl(12, 5, 9, 3) + cyl(12, 11, 5, 3) + cyl(12, 14, 9, 6), rib: p('M1 16L16 3l7 3v10l-12 6z', 'url(#gB)', '#5a74c8', .8) + p('M9 16L16 5l2 2-2 10-5 2z', 'url(#gO)', '#a86010', .8),
            offsetface: p('M1 4l5-3h17l-6 3z', '#ffd060', '#d09028', .7) + arrow(12, 10, 180) + plate(16), datumtext: p('M4 3h18l1 18H0z', '#fff8a0', '#d8c840', .8) + p('M4 18V9h5l2-3h9v12z', '#fff', '#222') + c(14, 12, 2, 'none', '#222'),
            thicken2: p('M1 7c4-3 10-3 15-1v6C10 10 6 10 3 14z', 'url(#gB)', '#5a56c8', .8) + l('M3 14c4-4 8-4 13-2', '#f0c020', 2.200) + arrow(20, 6, 180) + l('M17 11h6M17 13h6', '#d03030', .8) + arrow(20, 18),
            trimbody: p('M1 23L21 1h2l-2 22z', '#fff66a', '#d8c840') + p('M1 7l6-4 11 1-4 5z', '#dbe8ff', '#5a74c8', .6) + p('M1 7l13 2v12L2 18z', 'url(#gB)', '#5a74c8', .6) + p('M14 9l5-5-1 13-4 4z', '#3c68e0', '#3c60cc', .6), split: cyl(12, 5, 9, 15) + arrow(12, 12, 180) + l('M12 14v6', '#b05818', 1.800),
            cubel: cubeb, cyll: cyl(12, 5, 9, 15), datumcsys: p('M1 5l10-3v14L2 22z', 'url(#gB)', '#6878e0', .8) + p('M12 2l11 3v15l-11-5z', '#d4e0ff', '#6878e0', .8) + p('M2 22l10-7 11 5-9 4z', '#f8f0ff', '#a050a0', .8) + dot(12, 15) + l('M12 15V0', '#5868d8'),
            draft: p('M1 17L9 3h6l8 13-9 7z', '#fff4', '#d03030', 1.100) + box(7, 2, 7, 8, 4), blend: p('M1 10v11l15 2V12z', 'url(#gB)', '#5a74c8', .6) + p('M16 12l6-6v12l-6 5z', '#3460dc', '#3c60cc', .6) + p('M1 10c0-5 3-7 6-7l15 3c-4 1-6 3-6 6z', 'url(#gO)', '#c87818', .8),
            faceblend: p('M14 3l8-2v13l-7 3z', 'url(#gB)', '#7888d8', .7) + p('M1 17l10-4c3-2 4-4 4-8l6 2c0 6-4 9-10 13z', 'url(#gO)', '#d08828', .8) + p('M1 17l10 4-2 2-8-4z', 'url(#gB)', '#5868c8', .7) ,
            softblend: p('M1 17c9-2 14-8 15-15l6 1c1 9-4 17-12 20z', 'url(#gO)', '#c88020', .8) + l('M6 19c8-3 12-8 13-16', '#fff4b0', 1.500),
            chamfer: p('M1 13h17v10H1z', 'url(#gB)', '#5868c8', .8) + p('M1 9L8 2h15l-5 8z', '#ffe498', '#e07818', .8) + p('M1 9l17 1v4H1z', '#f4a048', '#c04818', .6) + p('M18 10l5-7v14l-5 5z', '#7c9cf0', '#5868c8', .6),
            shell: p('M1 8l7-4 4 2 4-5 6 2v14l-6 6L1 19z', '#3460dc', '#4460c0', .7) + p('M1 8l6 1v4l7 1V8l2 1v14L1 19z', 'url(#gB)', '#4460c0', .6) + p('M3 12l3 1v3l8 2v3L3 18zM9 7l3-2v5l-3 1z', 'url(#gO)', '#b05818', .6),
            sew: p('M1 5c3-4 7-4 10 0v17c-3-2-7-2-10 0zM13 5c3-4 7-4 10 0v17c-3-2-7-2-10 0z', 'url(#gC)', '#5a74c8', .8) + l('M12 4v18', '#e02020', 2).replace('/>', ' stroke-dasharray="2 1"/>'),
            wraps: p('M2 13c3-6 8-6 10 3v6H2zM12 16c0-8 8-8 10-4v7l-10 3z', 'url(#gY)', '#d09028', .8) + l('M2 13V6l8-4c6-1 12 1 12 4v6M2 6l10 2 10-2M12 8v8', '#d03030', .9),
            patch: iso(1, 3, 4.500) + iso(7, 5, 3) + iso(12, 15, 5.500) + l('M2 14v4h5', '#d04818', 1.300) + p('M7 15l4 3-4 3z', '#d04818', 'none'),
            offsets: p('M4 12c2-5 7-6 18-5v8l-6 6H4z', 'url(#gB)', '#3c58b8', .9) + l('M4 14h12l6-7M16 14v7', '#3c58b8', .8) + l('M1 18V9C4 3 10 2 20 3l3 4', '#d03030', 1),
            copyf: cyl(6, 4, 5, 16) + cyl(18, 13, 4, 8) + l('M12 4l4 1', '#d87828', 1.500) + arrow(17, 7, -30), mirror1: p('M10 3l12-3v16l-12 4z', '#fff480a0', '#e0a030', .8) + l('M1 8h10v11H1zM1 8l5-4h10M11 19l5-4V4M11 8l5-4', '#d06838', 1.100) + r(9, 6, 8, 9, 'none', '#222', 1.200),
            slab: slab(8) + l('M3 13L20 6', '#e02020', 1.400), slab2: `<g transform="scale(.8)">${slab(1)}</g><g transform="translate(6 12) scale(.8)">${slab(0)}</g>` + arrow(19, 9, -20) + l('M5 4l9 2', '#222', .8),
            unite: gball, subtract: r(1, 8, 15, 15, '#23806c', '#0c4038') + c(16, 8, 7, '#efede2', '#222', 1.200) + l('M9 8h7v7', '#222'), inter: r(1, 8, 15, 15, 'none', '#222', 1.200) + p('M9 8h7v7c-4 0-7-3-7-7z', '#23806c', '#222') + c(16, 8, 7, 'none', '#222', 1.200),
            boxhalf: box(1, 4, 9, 12, 4) + box(11, 4, 9, 12, 4, 'o') + l('M11 8V20h9V8zM20 8l4-4v12l-4 4', '#e05030', .9), holes4: cubeb + [[4, 9], [10, 10], [4, 14], [10, 15]].map(a => r(a[0], a[1], 3.500, 3.500, 'url(#gO)', '#b05818', .8)).join(''),
            ruled: bands, thru: bands + l('M8 5c0 5 1 8 2 11M15 5c0 5-1 8-1 12', '#5a56c8'), mesh: bands + l('M8 5c0 5 1 8 2 11M15 5c0 5-1 8-1 12M3 11c6 1 11 1 17-1', '#5a56c8'),
            swept: p('M2 17L10 4l12 4-9 14z', '#fff', '#d03838', 1.200) + l('M5 13l11 4M8 8l11 4M6 19l9-13M10 20l8-13', '#888', .8) + arrow(7, 4, 110) + arrow(20, 18, -60),
            sections: p('M1 14L16 4h7l-1 8L8 22z', '#fff6c0', '#302c90', 1.100) + l('M1 14h7v8M8 14L23 4', '#302c90', 1.100) + l('M6 11l7 1v6M11 7l7 1v6', '#a02868', 1.100),
            bridge3: l('M6 6c4 4 8-3 12 1M5 10c4 4 8-2 13 1M5 14c4 4 9-2 14 1M9 5v13M13 5v13M17 6v13', '#e07030', 1) + l('M3 4c6 4 10-3 18-1l-3 6M3 21c6 3 10-3 20-2M3 21l3-6M3 4l4 5', '#3868c0', 1.200),
            nsided: bands + p('M8 16c-2-8 10-10 10-2v3c-3-1-5-1-7 2z', '#c8dcff', '#222', 1.200), transition: p('M9 1l6 1c0 5 1 9 8 11l-1 5c-4-1-7-1-9 5-3 0-6-2-8-6l-4-5c5-1 8-5 8-11z', 'url(#gO)', '#d08828', .7) + p('M15 2l4-2c0 6 1 8 4 9v4c-6-2-8-6-8-11zM1 12l4 5-4 0z', 'url(#gB)', '#6878d0', .7),
            meshred: p('M1 12L9 3c5-1 9 1 13 5l-3 14c-6-1-12-3-18-5z', '#f4f0ff', '#5a56c8') + l('M5 8c5 0 10 2 15 7M9 3L7 18M16 5l-3 15', '#5a56c8') + l('M1 17l18 5 3-14', '#e02858', 1.200),
            wave: p('M1 10l5-6c3 6 8 3 11-3l6 7c-3 6-7 10-16 11z', 'url(#gB)', '#6080d0', .8) + p('M8 21l4-5 4 4zM18 16l5-2-3 6z', '#ffe080', '#e03838', .8),
            enlarge: p('M2 3c4 2 6-1 9-1v10c-4 1-6 2-9 1z', 'url(#gB)', '#6080d0', .8) + p('M10 12c5 2 8-2 13-2v11c-5 1-9 2-13 1z', 'url(#gO)', '#e08828', .8) + l('M3 15v4h4', '#d04818', 1.300) + p('M6 16l4 3-4 3z', '#d04818', 'none'),
            trimsheet: p('M1 18C8 14 6 6 10 4l8 3 4 13-10 3z', 'url(#gB)', '#6080d0', .8) + l('M11 1l9 8M9 4l10 7', '#e03030', 1.100), orangepipe: p('M9 1h13v15c-5-1-9 2-10 7L2 16c5-3 7-8 7-15z', 'url(#gO)', '#d07820') + l('M9 14c4 3 9 1 13 2M9 14l-7 3', '#e02020', 1.200),
            wrench1: l('M2 8L12 2l10 8-3 10', '#5838c0', 1.200) + [[5, 3], [17, 2], [22, 11], [4, 12], [17, 21]].map(a => dot(...a)).join('') + wrench, redmesh: p('M1 13C5 10 7 7 8 4c6-1 12 1 15 5-3 3-5 7-5 11-5-3-11-6-17-7z', '#eee8ff', '#c82848', 1.300) + p('M7 13c2-2 3-4 4-6 3 0 5 1 7 3-2 2-3 4-3 6-3-2-5-3-8-3z', '#c8d8ff', '#4440b8'),
            wrench2: p('M5 14C9 10 8 4 12 3l9 5 2 11-9 4z', 'url(#gB)', '#6080d0', .8) + l('M12 1l9 7', '#e03030') + wrench,
            waves2: p('M1 5c7 5 11-6 22-2l-2 6c-8-2-12 6-19 2z', 'url(#gB)', '#6080d0', .8) + p('M1 17c7 5 11-5 22-2l-2 6c-8-2-12 5-19 2z', 'url(#gB)', '#d82838', 1) + arrow(12, 12), waveup: p('M1 8c4-4 7-2 10 0s8 2 12-3v12c-4 5-9 4-12 2s-6-3-10 1z', 'url(#gB)', '#6080d0', .8) + arrow(12, 5, 180) + l('M12 7v16', '#555', 1.200),
            dimbox: p('M1 8l5-4h12l-3 5z', '#dbe8ff', '#5a74c8', .6) + p('M1 8l14 1v14L2 21z', 'url(#gB)', '#5a74c8', .6) + p('M15 9l3-5v14l-3 5z', '#3460dc', '#3c60cc', .6) + l('M8 2h13M19 5l4-3M17 22h6M21 5v14', '#444', .8) + l('M19 9l4 4M23 9l-4 4', '#d02020'), undogear: c(16, 11, 6, 'url(#gB)', '#5a7cd8', 1) + c(16, 11, 7, 'none', '#5a7cd8', 2).replace('/>', ' stroke-dasharray="3 2"/>') + c(16, 11, 2.500, '#eee', '#3c58b8') + l('M3 7c1-6 7-6 8-1', '#18245c', 2.200) + p('M0 3l1 6 6-2z', '#18245c', 'none') + `<g transform="translate(0 7) scale(.7)">${wrench}</g>`,
            movef: step() + l('M1 10h8', '#d03030', 1.600), placef: base() + box(7, 5, 6, 9, 2, 'o') + arrow(20, 6, 60), greyface: base() + r(9, 4, 7, 11, '#e4e8f4', '#90a0d0', .8), deletedim: l('M4 3l12 13M16 3L4 16', '#222', 2) + l('M18 3h5M18 17h5M20.500 3v14M2 18v5M16 18v5M2 21h14', '#333', .9) + l('M8 19l3 3M11 19l-3 3M21 9l3 3', '#d02020'),
            lockf: step() + l('M9 3a5 5 0 1 0 1 8', '#384870', 1.800) + r(15, 15, 8, 7, '#8090c0', '#182040') + l('M17 15v-3h4v3', '#182040', 1.200), greylock: step('g') + l('M9 3a5 5 0 1 0 1 8', '#98958a', 1.800), redflag: step() + p('M19 1l5 4-5 5z', '#d81818', 'none'),
            redbox: cubeb + box(0, 9, 8, 8, 3, 'o') + p('M23 2v8l-6-4zM23 13v8l-6-4z', '#a81828', 'none'), patterns: l('M1 9l4-5h18l-4 5zM1 22l4-5h18l-4 5z', '#7890d0', .8) + r(7, 1, 3, 6, 'url(#gB)', '#6080d0', .8) + r(14, 1, 3, 6, 'url(#gB)', '#6080d0', .8) + r(6, 14, 4, 7, 'url(#gY)', '#c09018', .8) + r(13, 14, 4, 7, 'url(#gY)', '#c09018', .8) + arrow(12, 11),
            redblend: p('M2 18c6-2 6-9 6-15l13-1v15l-5 6z', '#2c55d4', '#203890', .6) + p('M2 18c6-2 6-9 6-15h9c0 8-2 14-5 18z', '#fcd8a8', '#e04020', 1.200), cyl2: cyl(17, 6, 5, 13) + e(17, 5, 5, 3, 'none', '#d03030', 1.100) + cyl(6, 16, 5, 5) + l('M4 11c0-5 3-6 6-6', '#d87828', 1.800) + p('M9 2l4 3-4 3z', '#d87828', 'none'),
            redpocket: l('M1 12l6-5h16l-4 5zM1 12v8l14 3 8-5V7', '#d03030', 1) + `<g transform="translate(3 2) scale(.8)">${slab(8)}</g>` + r(12, 2, 5, 9, '#d8dce8', '#a0a8c8', .8), lstep: p('M1 17l6-3 16 1-7 7H6z', 'url(#gB)', '#5a74c8', .7) + box(14, 2, 5, 12, 3) + p('M6 17V5l3-3h7v5h-3v6z', 'url(#gO)', '#d08828', .7),
            greens: slab(12) + cyl(6, 9, 2, 7, '#78c080', '#48a058', '#c0ecc0') + cyl(12, 6, 2, 8, 'url(#gO)', '#c88828', '#ffe8a0') + cyl(17, 8, 2, 7, '#78c080', '#48a058', '#c0ecc0'), radface: p('M2 18c6-2 8-7 9-14l11-1v12l-6 7H4z', '#3a66dc', '#203890', .6) + p('M5 18c5-3 7-8 7-14h7c0 7-2 12-6 15z', '#ffe8c0', '#e08840', .8) + arrow(4, 5, -60),

            // assembly bar
            addcomp: comp(1, 2) + comp(1, 13) + comp(10, 14) + l('M19 1v9M14.500 5.500h9', '#1860d0', 2), newcomp: l('M5 1v9M1 6h10M2 2l7 7M9 2L2 9', '#d8c018', 1.100) + comp(8, 4, 7) + l('M12 12v10M12 15h6M12 21h6', '#666') + r(18, 12, 4, 4, '#fff8d8', '#888', .8) + r(18, 19, 4, 4, '#fff8d8', '#888', .8),
            array: comp(-1, 11) + comp(7, 12) + comp(15, 13) + l('M19 1v8M15 5h8', '#1860d0', 2), mirror: p('M5 1l6 5-6 5zM19 1l-6 5 6 5z', '#2030c8', 'none') + r(1, 14, 9, 9, '#fff04a', '#907818') + p('M14 14l10 9H14z', '#c81820', '#701018', .6) + l('M12 0v24', '#333'),
            explodea: comp(5, 5, 13) + l('M17 1h6v6M1 17v6h6', '#1860d0', 1.600) + l('M15 3h4M21 9V6M3 15v4M5 21h5', '#1860d0', 1.200), replace: p('M1 10l10-6v16L2 17z', '#fff0d0', '#e8a850', 1) + comp(9, 2, 8) + comp(11, 12, 10) + l('M9 9l-5 3 5 3', '#e89030', 1.300), mate: wrench + r(11, 2, 6, 6, '#fff8d0', '#222') + r(17, 8, 6, 6, '#fff8d0', '#222') + r(11, 8, 6, 6, '#f8e050', '#222'),
            compson: comp(2, 1) + comp(2, 14) + comp(14, 14), move: r(13, 1, 6, 6, '#fff', '#444') + r(9, 8, 6, 6, '#fff', '#444') + r(4, 15, 7, 7, '#ffd850', '#e06818', 1.300), chain: e(9, 7, 4, 6, 'none', '#a89a18', 2) + e(12, 13, 4, 6, 'none', '#c8b828', 2) + e(15, 18, 3.500, 5, 'none', '#a89a18', 1.800),
            check: l('M2 4h8M22 4h-8', '#c81820', 1.200) + p('M10 4l-4-3v6zM14 4l4-3v6z', '#c81820', 'none') + r(8, 9, 6, 6, '#fff04a', '#555') + r(2, 15, 6, 6, '#fff04a', '#555') + r(8, 15, 6, 6, '#fff04a', '#555') + l('M11 17l4 5 8-10', '#20a838', 2.400),
            ex1: comp(1, 0) + comp(1, 13) + comp(13, 13) + l('M14 4v10M9 9h10M11 6l6 6M17 6l-6 6', '#f0c818', 1), ex2: comp(1, 0, 9, 'g') + comp(1, 14, 9, 'g') + comp(13, 8, 9, 'g') + l('M6 8l6 5M5 15l8-2', '#a5a293', 3), ex3: comp(1, 0, 9, 'g') + comp(1, 13, 9, 'g') + comp(13, 13, 9, 'g') + l('M11 12l11-11', '#a5a293', 2.600), ex4: box(4, 4, 6, 16, 3, 'g') + box(10, 12, 8, 8, 3, 'g') + p('M4 5l4-5 4 5z', '#a5a293', 'none'),
            ex5: comp(1, 0) + comp(1, 13) + comp(13, 7) + l('M6 6l13 13M18 6L6 18', '#222', 1.800), hidec: p('M0 6l6 5-6 5z', '#d01818', 'none') + comp(6, 3, 15, 'w'), showc: p('M0 6l6 5-6 5z', '#d01818', 'none') + comp(6, 3, 15), trace: l('M2 22l7-5V2l10 4', '#333', 1.200) + dot(2, 22, '#1838a0') + dot(19, 6, '#1838a0'),

            // resource bar
            t1: r(2, 2, 5, 5, '#fff04a', '#888020') + r(2, 7, 5, 5, '#fff04a', '#888020') + r(7, 7, 5, 5, '#fff04a', '#888020') + l('M12 11h11', '#555', 1.300) + l('M4 13v9M4 18h5', '#4858b8') + r(9, 15, 6, 6, '#fff04a', '#888020') + l('M16 20h7', '#555', 1.300),
            t2: cyl(5, 3, 4, 6, '#f8e0e0', '#c03040', '#f8e0e0') + l('M9 9h14', '#555', 1.300) + l('M4 12v9M4 17h5', '#4858b8') + e(13, 18, 4.500, 3.500, 'none', '#c03040', 1.300) + c(13, 18, 1.500, 'none', '#c03040') + l('M18 21h5', '#555', 1.300),
            t3: p('M3 1h14l5 5v17H3z', '#fff8a0', '#9098b0') + c(12, 13, 6, '#3888e0') + p('M7 11c4-5 7 0 5 3s-3 3-4 4z', '#48b848', 'none'), t4: p('M1 9l12-6 10 5-12 7z', '#505860', '#303438') + p('M6 12v4c4 3 9 2 12-1v-4l-7 4z', '#687078', '#303438', .7) + l('M6 11v6', '#e03030', 1.200) + l('M6 16v7', '#e03030', 2.400),
            t5: p('M3 2h18v16h-3l3 5-7-5H3z', '#fff78a', '#8090b8') + l('M9 8c0-5 7-5 6-1 0 2-3 3-3 5', '#182878', 2.600) + r(10.600, 14, 3, 3, '#182878'),
            t6: c(12, 12, 10, '#e8f4fc', '#687888', 2) + l('M12 4v2M12 18v2M4 12h2M18 12h2M12 6v7h5', '#182838', 1.400), t7: r(9, 2, 14, 18, '#fff', '#606878') + p('M1 4l6-3v19l-6 3z', '#d8e8e8', '#607880') + dot(13, 6, '#3858d0') + dot(13, 11, '#28a038') + dot(13, 16, '#d02828') + l('M16 6h5M16 11h5M16 16h5', '#333'),
            t8: r(2, 1, 8, 22, 'url(#gR)') + l('M14 8l8 14', '#5850b8', 2.600) + l('M14 1v8M10 5h8M11 2l6 6M17 2l-6 6', '#f0f080', 1.400), t9: r(3, 4, 6, 14, '#5058b0', '#282c70') + l('M14 9l8 12', '#5850b8', 2.400) + l('M14 1v8M10 4h8', '#f0f080', 1.800) + l('M2 15h8l4-5h9M4 18h8l3-6h6M3 20h8', '#333', .9),
            t10: c(16, 6, 4.500, '#f8c080', '#a87020') + p('M11 4c2-5 9-4 10 1z', '#d89828', 'none') + p('M10 17c0-6 13-6 13 0z', '#28883c', '#185820', .6) + c(7, 12, 4.500, '#f8c8a0', '#604838') + p('M2 12c0-7 9-7 10-1z', '#504840', 'none') + p('M0 23c0-7 13-7 13 0z', '#8858d0', '#503090', .6),
            t11: r(1, 2, 22, 20, '#fff', '#000', 1.200) + r(6, 4, 11, 13, 'none', '#000', 1.100) + l('M6 8h11M6 12h11M8 12v3M15 12v3M6 15h11', '#000', 1.100) + r(15, 19, 8, 3, 'none', '#000', 1.100) + l('M18 19v3', '#000', 1.100), t13: r(1, 1, 22, 21, '#fff', '#5c88a0', 1.400) + r(3, 3, 6, 6, '#5058c0') + r(16, 3, 6, 6, '#5058c0') + p('M3 13h3l3 3v4H3z', '#fff', '#5058c0') + r(14, 14, 8, 6, '#606888') + l('M9 6h6M10 18h4', '#333'),

            // tree
            views: p('M3 6l8-5 8 3v12l-8 5-8-4z', 'none', '#208868', 1.300) + l('M3 6l8 3 8-5M11 9v12', '#208868', 1.200) + l('M6 23l17-5', '#c02020', 2), folder: p('M1 20V7h7l2 2h9v3', '#fff080', '#000', 1.300) + p('M1 20l6-9h16l-5 9z', '#808000', '#000', 1.300), expr: p('M1 20V9h7l2 2h9v3', '#fff080', '#000', 1.300) + p('M1 20l6-7h16l-5 7z', '#808000', '#000', 1.300) + l('M12 2h10M12 6h10', '#2040c0', 1.800),
            n1: l('M3 1v7M1 3h5', '#2030a0', 1.500) + l('M7 8v12l14 2M7 20l6-9 8-5M12 6l2 14M7 12l12 4', '#2030a0', 1.400), n2: r(1, 2, 8, 6, 'none', '#2030a0', 1.800) + r(1, 12, 6, 10, 'none', '#2030a0', 1.800) + l('M10 12v10h12v-9', '#2030a0', 1.800) + p('M12 13l8-11 3 2-7 10z', '#ffe040', '#000'), n3: p('M2 20l6-5h14l-5 5z', '#fff080', '#333') + l('M2 11l7-7h14l-5 7zM2 11v10M18 11v9l5-6V4', '#333', 1.100) + l('M6 9h12M10 6h11', '#777', .9), n4: p('M2 2c6 4 14 2 20 2 0 8-4 14-9 17C8 18 8 8 2 2z', '#fff', '#181c60', 1.600),
            n5: p('M2 15C2 5 15 3 19 10l-3 7c-4-5-9-4-14-2z', '#fffbe8', '#222', 1.400) + l('M22 1v8M22 14v9', '#c02020', 1.600), n6: p('M2 11c0-5 3-7 7-7l7-2 6 4-5 5-3 3z', '#f8d8f0', '#604060') + p('M2 11l12 3v9H2z', '#fff8b0', '#333') + p('M14 14l8-8v10l-8 7z', '#e0d470', '#333'), n7: p('M1 12l5-4h17l-5 4zM18 12l5-4v10l-5 5z', '#a8b4b8', '#333') + r(1, 12, 17, 11, '#f4e4f4', '#333') + l('M4 15h4v2H4v3h4M11 15h4v5h-4z', '#a01090', 1.800) + r(12, 1, 6, 6, '#fff', '#a01090', 1.600),
            n8: c(7, 6, 5, '#fff', '#901818', 2) + l('M4 9l7-6', '#901818', 2) + r(13, 1, 7, 8, '#d8e0ff', '#2030a0', 1.300) + l('M6 12v9h6M13 9v5', '#2030a0', 1.300) + p('M13 14l9-2v8l-7 3z', '#fff04a', '#222', 1.200), n10: cyl(12, 5, 8, 15, '#fff9d8', '#333', '#fffef0') + l('M17 8v14', '#999', 3), n11: p('M2 9h13v13H2z', '#108070', '#000', 1.300) + c(16, 9, 6, '#108070', '#000', 1.300) + l('M4 11l9 9', '#053c34'),
        };

        const svg = (name, size = 24) => `<svg width="${size}" height="${size}" viewBox="0 0 24 24" class="shrink-0 overflow-visible">${icons[name]}</svg>`;
        const down = '<svg width="7" height="4"><path d="M0 0h7L3.500 4z"/></svg>';
        const tiles = { '座': 'text-[#2020f0]', '設': 'text-[#902090]', '圖': 'text-[#2020f0]', '界': 'text-[#208878]', '移': 'text-[#f02020]', '稱': 'text-[#902090]' };

        const combo = (label, options, size) => `<label class="relative my-auto flex ${size}"><select aria-label="${label}" class="h-[22px] w-full appearance-none border border-[#7f9db9] bg-white pl-[2px] text-[15px] leading-[20px]"><option>${options}</option></select><span class="pointer-events-none absolute top-[2px] right-[2px] grid h-[18px] w-[15px] place-items-center rounded-[1px] bg-[#c3d3fd]"><svg width="9" height="6"><path d="M1 1l3.500 3.500L8 1" fill="none" stroke="#4d6185" stroke-width="2"/></svg></span></label>`;

        const tool = (name) => {
            if (name === '|') return '<i class="mx-[2px] my-auto h-[26px] w-[2px] border-l border-[#c8c5b4]"></i>';
            if (name === 'v') return `<button aria-label="工具栏选项" class="flex w-[14px] items-end justify-center pb-[7px]">${down}</button>`;
            if (name === '>') return `<button aria-label="下拉" class="flex w-[11px] items-center justify-center">${down}</button>`;
            if (name === 'start') return `<button class="flex w-[75px] items-center gap-[3px] pl-[3px] text-[16px] leading-[20px]">${svg('logo')}<span>起始</span>${down}</button>`;
            if (name === 'any') return combo('类型过滤器', '任何', 'ml-[4px] w-[102px]');
            if (name === 'assembly') return combo('选择范围', '整个装配', 'mx-[7px] mr-[4px] w-[126px]');
            if (name === 'layer') return combo('工作图层', '1', 'mx-[4px] w-[46px]');
            if (name === 'explosion') return `<label class="relative mx-[4px] my-auto flex w-[134px]"><select aria-label="工作爆炸视图" disabled class="h-[22px] w-full appearance-none border border-[#7f9db9] bg-[#ebe8d7]"><option></option></select><span class="pointer-events-none absolute top-[2px] right-[2px] grid h-[18px] w-[15px] place-items-center border border-white bg-[#f0eee2]"><svg width="9" height="6"><path d="M1 1l3.500 3.500L8 1" fill="none" stroke="#c5c2b2" stroke-width="2"/></svg></span></label>`;
            if (tiles[name]) return `<button class="grid w-[31px] place-items-center"><span class="h-[23px] w-[23px] bg-[#d6d3cc] text-center font-['Noto_Sans_CJK_TC',sans-serif] text-[21px] leading-[22px] font-bold ${tiles[name]}">${name}</span></button>`;
            if (name === 'compson') return `<button aria-label="${name}" aria-pressed="true" class="my-auto grid h-[30px] w-[31px] place-items-center rounded-[3px] border border-[#6c5040] bg-[#fdc899]">${svg(name)}</button>`;
            return `<button aria-label="${name}" class="grid w-[31px] place-items-center">${svg(name)}</button>`;
        };

        document.querySelectorAll('[data-icon]').forEach(el => { el.innerHTML = svg(el.dataset.icon, 18); });

        document.querySelectorAll('[data-bar]').forEach(el => {
            el.className = 'flex border-r border-b border-t border-t-white border-[#d2cfbe]';
            el.innerHTML = '<i class="mx-[2px] my-auto h-[24px] w-[3px] border-l-2 border-dotted border-[#a8a594]"></i>' + el.dataset.bar.split(' ').map(tool).join('');
        });

        document.querySelectorAll('[data-palette]').forEach(el => {
            el.className = 'flex flex-col border-r border-b border-t border-t-white border-[#cfccb9] bg-[#f1efe5]/70';
            el.innerHTML = '<i class="mx-auto mt-[3px] h-[2px] w-[24px] border-t-2 border-dotted border-[#a8a594]"></i>' + el.dataset.palette.split(' ').map(name => {
                if (name === '|') return '<i class="mx-[3px] my-[2px] h-[2px] border-t border-[#c8c5b4]"></i>';
                if (name === 'v') return '<button aria-label="工具栏选项" class="flex h-[14px] items-center pl-[4px]"><svg width="4" height="7"><path d="M4 0v7L0 3.500z"/></svg></button>';
                return `<button aria-label="${name}" class="grid h-[31px] place-items-center">${svg(name)}</button>`;
            }).join('');
        });

        const menus = [['文件', 'F'], ['编辑', 'E'], ['视图', 'V'], ['插入', 'S'], ['格式', 'R'], ['工具', 'T'], ['装配', 'A'], ['信息', 'I'], ['分析', 'L'], ['首选项', 'P'], ['窗口', 'O'], ['帮助', 'H']];
        document.getElementById('menus').innerHTML = menus.map(m => `<button class="mr-[14px] flex items-center leading-[22px]"><span class="text-[16px]">${m[0]}</span><span class="w-[23px]">(<u>${m[1]}</u>)</span></button>`).join('') + '<button>HB_MOULD(V5.5)</button>';

        const roots = [['views', '模型视图', '+'], ['expr', '用户表达式', '+'], ['folder', '模型历史', '−']];
        const nodes = [['n1', 'Datum Coordina...', '6', 1], ['n2', 'Sketch (1) "SK...', '4', 1], ['n3', 'Extrude (2)', '2', 1], ['n4', 'Ruled (3)', '8', 1], ['n5', 'Thicken Sheet (4)', '1'], ['n6', 'Blend (5)', '1'], ['n7', 'Feature Set (7...', ''], ['n8', 'Body (8)', '1'], ['n8', 'Body (9)', '1'], ['n10', 'Cylinder (10)', '1'], ['n11', 'Unite (11)', '1'], ['n11', 'Unite (12)', '1'], ['n11', 'Unite (13)', '1']];
        document.getElementById('tree').innerHTML = roots.map(n => `<li class="flex h-[16px] items-center pl-[5px]"><button aria-label="展开" class="grid h-[9px] w-[9px] place-items-center border border-[#8c8c8c]"><svg width="7" height="7"><path d="${n[2] === '+' ? 'M1 3.500h5M3.500 1v5' : 'M1 3.500h5'}" stroke="#000"/></svg></button><i class="w-[5px] border-t border-dotted border-[#a0a0a0]"></i><span class="flex w-[19px]">${svg(n[0], 16)}</span><span class="text-[13px] leading-[16px]">${n[1]}</span></li>`).join('')
            + '<li><ul>' + nodes.map((n, i) => `<li class="flex h-[16px] items-center pl-[28px]"><i class="${i === nodes.length - 1 ? 'mb-[8px] h-[8px] border-b' : 'h-[16px] bg-linear-to-b from-transparent from-47% via-[#bbb] via-50% to-transparent to-53%'} w-[8px] border-l border-dotted border-[#a0a0a0]"></i><label class="flex items-center pl-[4px] ${n[3] ? 'text-[#9c9c9c]' : ''}"><span class="relative h-[12px] w-[15px]"><input type="checkbox" checked class="block h-[11px] w-[11px] appearance-none border border-black bg-white"><svg width="13" height="12" class="pointer-events-none absolute top-0 left-0"><path d="M2 5l3 4 7-8" fill="none" stroke="#18c030" stroke-width="2"/></svg></span><span class="w-[18px]">${svg(n[0], 16)}</span><span class="w-[125px] text-[11px] leading-[16px] whitespace-nowrap">${n[1]}</span></label><span class="w-[7px] text-[11px] leading-[16px] ${n[3] ? 'text-[#9c9c9c]' : ''}">${n[2]}</span></li>`).join('') + '</ul></li>';

        const tab = (name, on) => `<button aria-label="${name}" class="grid place-items-center border-t border-b border-t-white border-b-[#c5c2b0] bg-[#f1efe5] ${on ? 'h-[44px] w-[29px]' : 'h-[42px] w-[27px]'}">${svg(name)}</button>`;
        document.getElementById('tabs1').innerHTML = tab('t1') + tab('t2', true);
        document.getElementById('tabs2').innerHTML = ['t3', 't4', 't5'].map(n => tab(n)).join('');
        document.getElementById('tabs3').innerHTML = ['t6', 't7', 't8', 't9', 't10', 't11', 't11', 't13'].map(n => tab(n)).join('');
    </script>
</body>

</html>
